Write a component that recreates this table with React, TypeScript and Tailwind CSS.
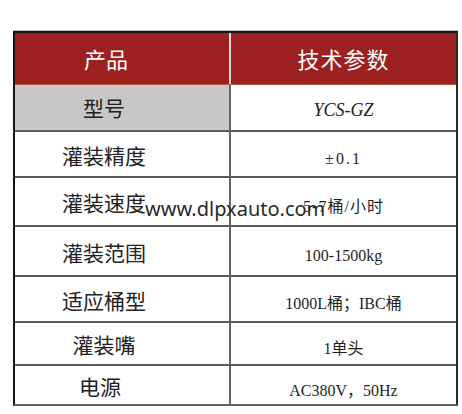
const rows = [
  { name: "灌装精度", value: "±0.1", h: "h-[46px]", track: "tracking-[2px]" },
  { name: "灌装速度", value: "5-7桶/小时", h: "h-[49px]", track: "tracking-[1px]" },
  { name: "灌装范围", value: "100-1500kg", h: "h-[50px]", track: "" },
  { name: "适应桶型", value: "1000L桶；IBC桶", h: "h-[46px]", track: "" },
  { name: "灌装嘴", value: "1单头", h: "h-[43px]", track: "" },
];

export default function App() {
  return (
    <div className="relative w-[462px] h-[414px] bg-white pt-[30px] font-['Noto_Sans_CJK_SC',sans-serif]">
      <div className="ml-[13px] w-[445px] border-t border-[#bbbbbb]">
        <div className="border-t-2 border-l-2 border-r-2 border-b-2 border-t-[#151515] border-l-[#151515] border-r-[#2a2a2a] border-b-[#666666]">
          {/* header */}
          <div className="grid grid-cols-[216px_225px] h-[52px] bg-[#9b201f] border-b border-[#b9583f] text-white text-[22px]">
            <div className="flex items-center justify-center pr-[32px] border-r-2 border-[#dcdcdc]">产品</div>
            <div className="flex items-center justify-center tracking-[1px]">技术参数</div>
          </div>

          <div className="grid grid-cols-[216px_225px] h-[47px] border-b-2 border-[#5c5c5c]">
            <div className="flex items-center justify-center pr-[36px] bg-[#c8c8c8] border-r-2 border-[#666666] text-[21px] text-[#222]">
              型号
            </div>
            <div className="flex items-center justify-center pt-[5px] italic text-[18px] text-[#222] font-['Liberation_Serif',serif]">
              YCS-GZ
            </div>
          </div>

          {rows.map((r) => (
            <div key={r.name} className={`grid grid-cols-[216px_225px] ${r.h} border-b-2 border-[#5c5c5c]`}>
              <div className="flex items-center justify-center pr-[36px] pt-[3px] border-r-2 border-[#666666] text-[21px] text-[#222]">
                {r.name}
              </div>
              <div className={`flex items-center justify-center pt-[10px] text-[16px] text-[#1f1f1f] font-['Liberation_Serif','Noto_Sans_CJK_SC',serif] ${r.track}`}>
                {r.value}
              </div>
            </div>
          ))}

          <div className="grid grid-cols-[216px_225px] h-[38px]">
            <div className="flex items-center justify-center pr-[44px] pt-[3px] border-r-2 border-[#666666] text-[21px] text-[#222]">
              电源
            </div>
            <div className="flex items-center justify-center pt-[12px] text-[16px] text-[#1f1f1f] font-['Liberation_Serif','Noto_Sans_CJK_SC',serif]">
              AC380V，50Hz
            </div>
          </div>
        </div>
      </div>

      <div className="absolute left-[145px] top-[199px] leading-[20px] text-[20px] text-[#2a2a2a] font-['Noto_Sans',sans-serif]">
        www.dlpxauto.com
      </div>
    </div>
  );
}
